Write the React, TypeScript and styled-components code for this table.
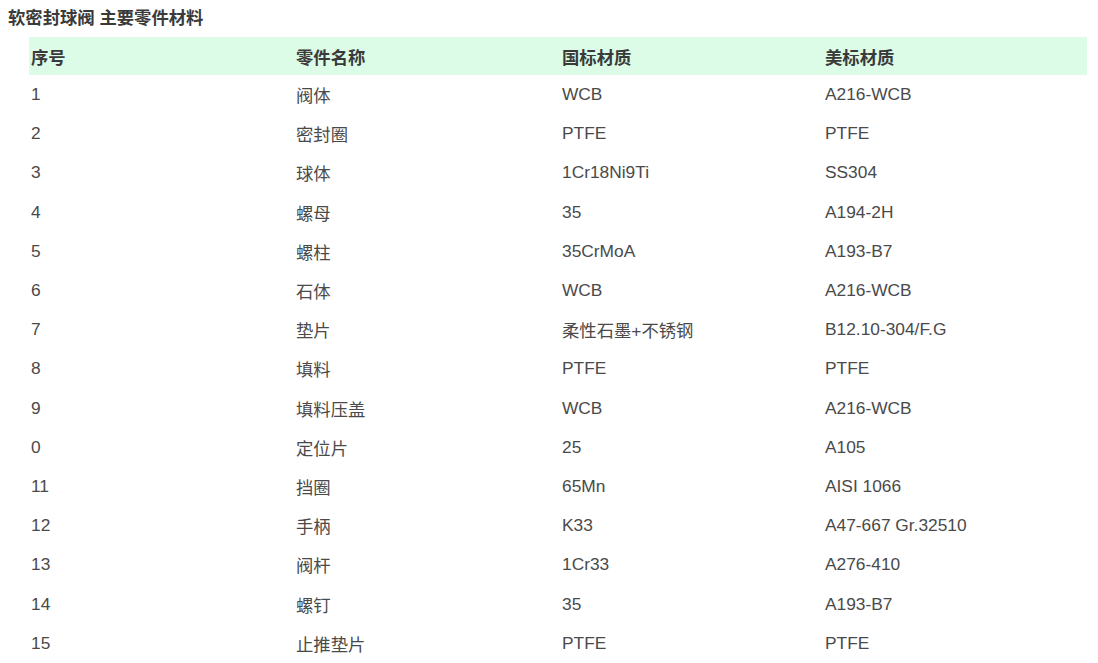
import React from "react";
import styled, { createGlobalStyle } from "styled-components";

const Global = createGlobalStyle`
  body {
    margin: 8px;
    background: #ffffff;
    font-family: "Liberation Sans", Arial, "Noto Sans CJK SC", sans-serif;
  }
`;

const Title = styled.h3`
  margin: 0 0 8px 0;
  font-size: 17.33px;
  line-height: 21px;
  font-weight: bold;
  color: #3a3a3a;
`;

const Table = styled.div`
  margin-left: 21px;
  width: 1058px;
  display: flex;
  flex-direction: column;
`;

const Row = styled.div<{ $head?: boolean }>`
  display: grid;
  grid-template-columns: 265px 266px 263px 1fr;
  height: ${(p) => (p.$head ? "38px" : "39.2px")};
  align-items: center;
  background: ${(p) => (p.$head ? "#dcfce8" : "transparent")};
  font-size: 17.33px;
  font-weight: ${(p) => (p.$head ? "bold" : "normal")};
  color: ${(p) => (p.$head ? "#3a3a3a" : "#4a4a4a")};
`;

const Cell = styled.div`
  padding-left: 2px;
  white-space: nowrap;
`;

const rows: [string, string, string, string][] = [
  ["1", "阀体", "WCB", "A216-WCB"],
  ["2", "密封圈", "PTFE", "PTFE"],
  ["3", "球体", "1Cr18Ni9Ti", "SS304"],
  ["4", "螺母", "35", "A194-2H"],
  ["5", "螺柱", "35CrMoA", "A193-B7"],
  ["6", "石体", "WCB", "A216-WCB"],
  ["7", "垫片", "柔性石墨+不锈钢", "B12.10-304/F.G"],
  ["8", "填料", "PTFE", "PTFE"],
  ["9", "填料压盖", "WCB", "A216-WCB"],
  ["0", "定位片", "25", "A105"],
  ["11", "挡圈", "65Mn", "AISI 1066"],
  ["12", "手柄", "K33", "A47-667 Gr.32510"],
  ["13", "阀杆", "1Cr33", "A276-410"],
  ["14", "螺钉", "35", "A193-B7"],
  ["15", "止推垫片", "PTFE", "PTFE"],
];

export default function App() {
  return (
    <>
      <Global />
      <Title>软密封球阀 主要零件材料</Title>
      <Table>
        <Row $head>
          <Cell>序号</Cell>
          <Cell>零件名称</Cell>
          <Cell>国标材质</Cell>
          <Cell>美标材质</Cell>
        </Row>
        {rows.map((r, i) => (
          <Row key={i}>
            {r.map((c, j) => (
              <Cell key={j}>{c}</Cell>
            ))}
          </Row>
        ))}
      </Table>
    </>
  );
}
